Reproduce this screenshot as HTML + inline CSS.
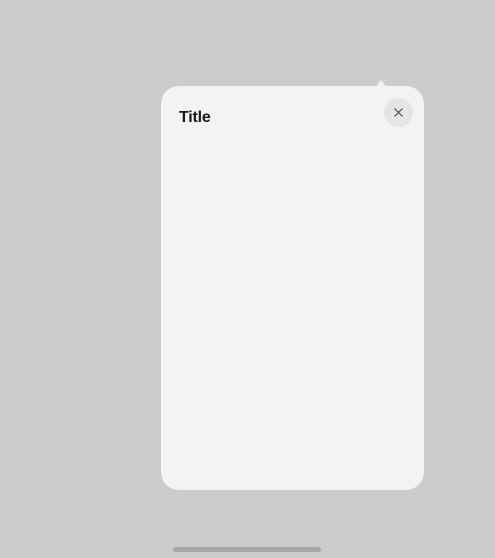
<!DOCTYPE html>
<html><head><style>
html,body{margin:0;width:495px;height:558px;background:#cccccc;overflow:hidden;font-family:"Liberation Sans",sans-serif;}
.card{position:absolute;left:161px;top:86px;width:263px;height:404px;background:#f3f3f3;border-radius:18px;}
.arrow{position:absolute;left:372px;top:80px;}
.title{position:absolute;left:179px;top:109px;font-size:16px;font-weight:bold;color:#1a1a1a;letter-spacing:-0.2px;}
.close{position:absolute;left:384px;top:98px;width:29px;height:29px;border-radius:50%;background:#e5e5e5;}
.bar{position:absolute;left:173px;top:547px;width:148px;height:5px;border-radius:3px;background:#a6a6a6;}
</style></head><body>
<svg class="arrow" width="18" height="8" viewBox="0 0 18 8"><path d="M0 8 C5 8 7 1 9 0.5 C11 1 13 8 18 8 Z" fill="#f3f3f3"/></svg>
<div class="card"></div>
<div class="title">Title</div>
<div class="close"><svg width="29" height="29" viewBox="0 0 29 29"><path d="M10.8 10.8 L18.2 18.2 M18.2 10.8 L10.8 18.2" stroke="#333" stroke-width="1" stroke-linecap="round"/></svg></div>
<div class="bar"></div>
</body></html>
